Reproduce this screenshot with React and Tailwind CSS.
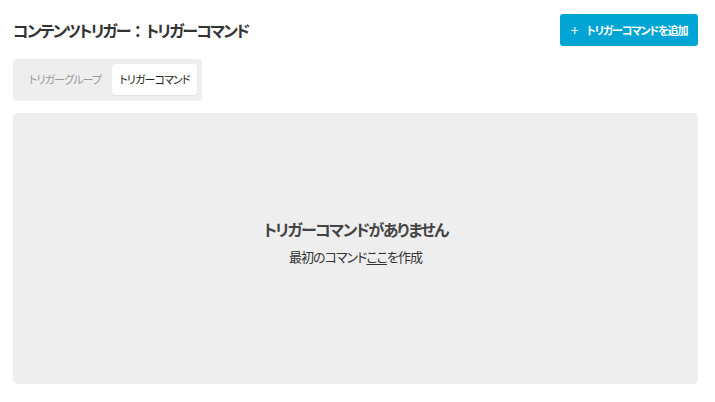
export default function App() {
  const font = { fontFamily: '"Noto Sans CJK JP", "Noto Sans", sans-serif' };
  return (
    <div className="w-[715px] h-[402px] bg-white px-[13px] pt-[14px] text-[#333] [font-feature-settings:'palt'] whitespace-nowrap" style={font}>
      <div className="flex items-center justify-between h-[32px]">
        <h1 className="text-[16px] font-bold text-[#333] tracking-[-1.8px]">
          コンテンツトリガー<span className="[font-feature-settings:normal] tracking-normal">：</span>トリガーコマンド
        </h1>
        <button className="h-[32px] w-[138px] mr-[4px] rounded-[3px] bg-[#00a5d4] text-white text-[11px] font-bold flex items-center justify-center gap-[8px]">
          <span className="text-[14px] font-normal leading-none">+</span>
          <span className="tracking-[-1.1px]">トリガーコマンドを追加</span>
        </button>
      </div>
      <div className="mt-[13px] inline-flex items-center bg-[#eeeeee] rounded-[4px] p-[5px] h-[41px] w-[189px] shadow-[0_1px_2px_rgba(0,0,0,0.06)]">
        <div className="w-[95px] text-center text-[11px] text-[#999] tracking-[-0.9px]">トリガーグループ</div>
        <div className="w-[86px] h-[31px] bg-white rounded-[4px] flex items-center justify-center text-[11px] text-[#222] tracking-[-0.9px] shadow-[0_1px_1px_rgba(0,0,0,0.05)]">トリガーコマンド</div>
      </div>
      <div className="mt-[13px] w-[685px] h-[271px] bg-[#eeeeee] rounded-[5px] flex flex-col items-center justify-center">
        <div className="text-[16px] font-bold text-[#444] tracking-[-1.5px] mb-[14px]">
          <div>トリガーコマンドがありません</div>
          <div className="text-[13px] font-normal text-[#333] mt-[6px] tracking-[-1px] text-center">
            最初のコマンド<span className="underline underline-offset-2">ここ</span>を作成
          </div>
        </div>
      </div>
    </div>
  );
}
